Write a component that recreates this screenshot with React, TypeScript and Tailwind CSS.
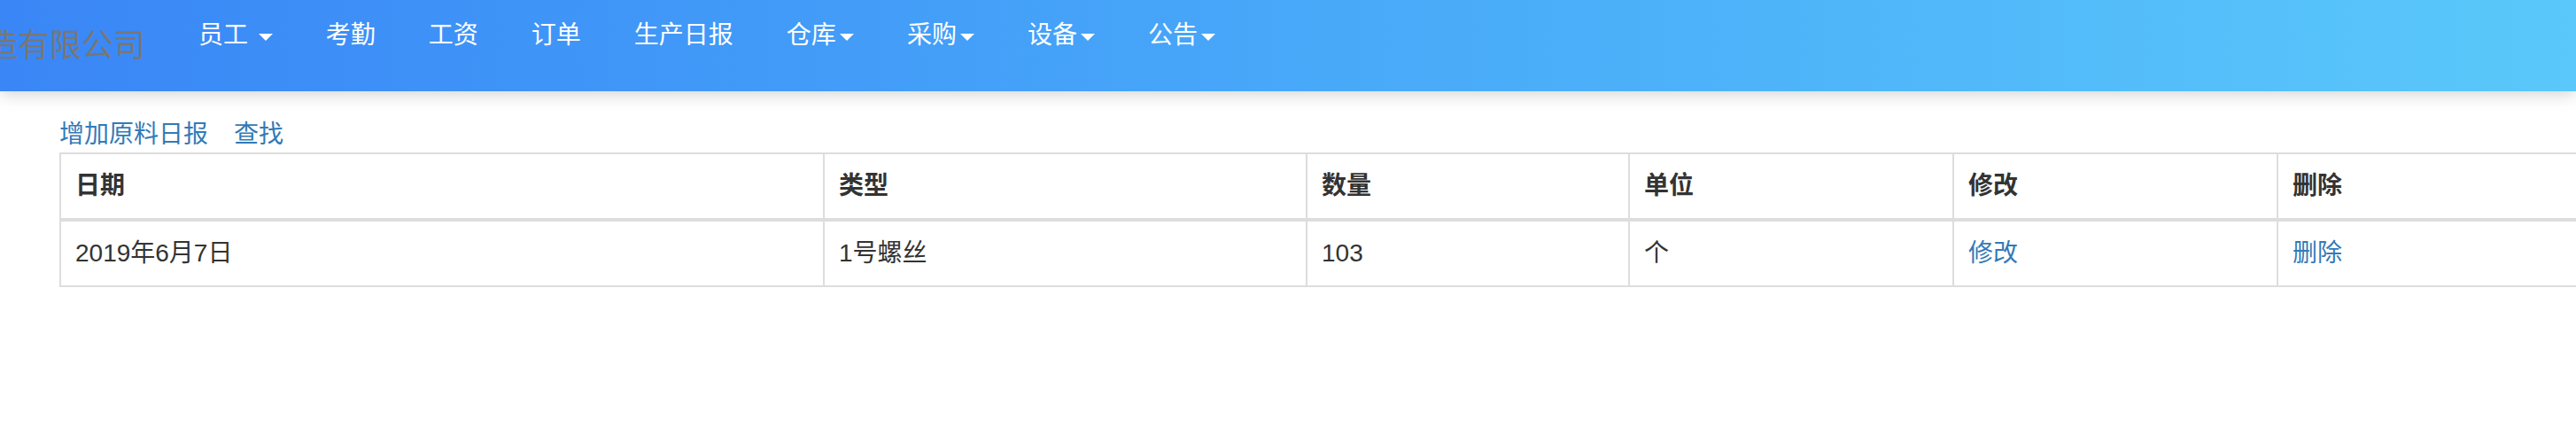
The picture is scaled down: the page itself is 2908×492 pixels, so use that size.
import React from "react"

const menu = [
  { label: "员工", drop: true, gap: true },
  { label: "考勤" },
  { label: "工资" },
  { label: "订单" },
  { label: "生产日报" },
  { label: "仓库", drop: true },
  { label: "采购", drop: true },
  { label: "设备", drop: true },
  { label: "公告", drop: true },
]

const cols = [
  { name: "日期", w: "w-[862px]" },
  { name: "类型", w: "w-[545px]" },
  { name: "数量", w: "w-[364px]" },
  { name: "单位", w: "w-[366px]" },
  { name: "修改", w: "w-[366px]" },
  { name: "删除", w: "w-[366px]" },
]

function Caret() {
  return <span className="inline-block w-0 h-0 ml-[4px] align-middle border-t-[8px] border-x-[8px] border-t-white border-x-transparent" />
}

export default function App() {
  return (
    <div
      className="w-[2908px] h-[492px] overflow-hidden bg-white text-[#333]"
      style={{ fontFamily: '"Helvetica Neue", "Liberation Sans", "Noto Sans CJK SC", sans-serif' }}
    >
      {/* Navbar */}
      <nav className="relative z-10 h-[103px] flex items-start bg-gradient-to-r from-[#3a86f6] to-[#5ac8fa] shadow-[0_3px_18px_rgba(0,0,0,0.18)]">
        <div className="w-[164px] h-[103px] flex items-center justify-end overflow-hidden">
          <span className="whitespace-nowrap text-[36px] leading-[40px] text-[#777]">新华制造有限公司</span>
        </div>
        <ul className="flex ml-[30px] pt-[20px]">
          {menu.map((m) => (
            <li key={m.label}>
              <a className="block px-[30px] text-[28px] leading-[40px] text-white whitespace-nowrap">
                {m.label}
                {m.gap && " "}
                {m.drop && <Caret />}
              </a>
            </li>
          ))}
        </ul>
      </nav>

      {/* Content */}
      <div className="pl-[67px] pt-[29px]">
        <div className="text-[28px] leading-[40px] text-[#337ab7] whitespace-nowrap">
          <a>增加原料日报</a>
          <a className="ml-[29px]">查找</a>
        </div>
        <table className="table-fixed border-collapse w-[2870px] text-[28px] leading-[40px]">
          <thead>
            <tr>
              {cols.map((c) => (
                <th key={c.name} className={`${c.w} text-left font-bold px-[16px] py-[16px] border-2 border-b-4 border-[#ddd]`}>
                  {c.name}
                </th>
              ))}
            </tr>
          </thead>
          <tbody>
            <tr>
              <td className="px-[16px] py-[16px] border-2 border-[#ddd]">2019年6月7日</td>
              <td className="px-[16px] py-[16px] border-2 border-[#ddd]">1号螺丝</td>
              <td className="px-[16px] py-[16px] border-2 border-[#ddd]">103</td>
              <td className="px-[16px] py-[16px] border-2 border-[#ddd]">个</td>
              <td className="px-[16px] py-[16px] border-2 border-[#ddd] text-[#337ab7]">修改</td>
              <td className="px-[16px] py-[16px] border-2 border-[#ddd] text-[#337ab7]">删除</td>
            </tr>
          </tbody>
        </table>
      </div>
    </div>
  )
}
